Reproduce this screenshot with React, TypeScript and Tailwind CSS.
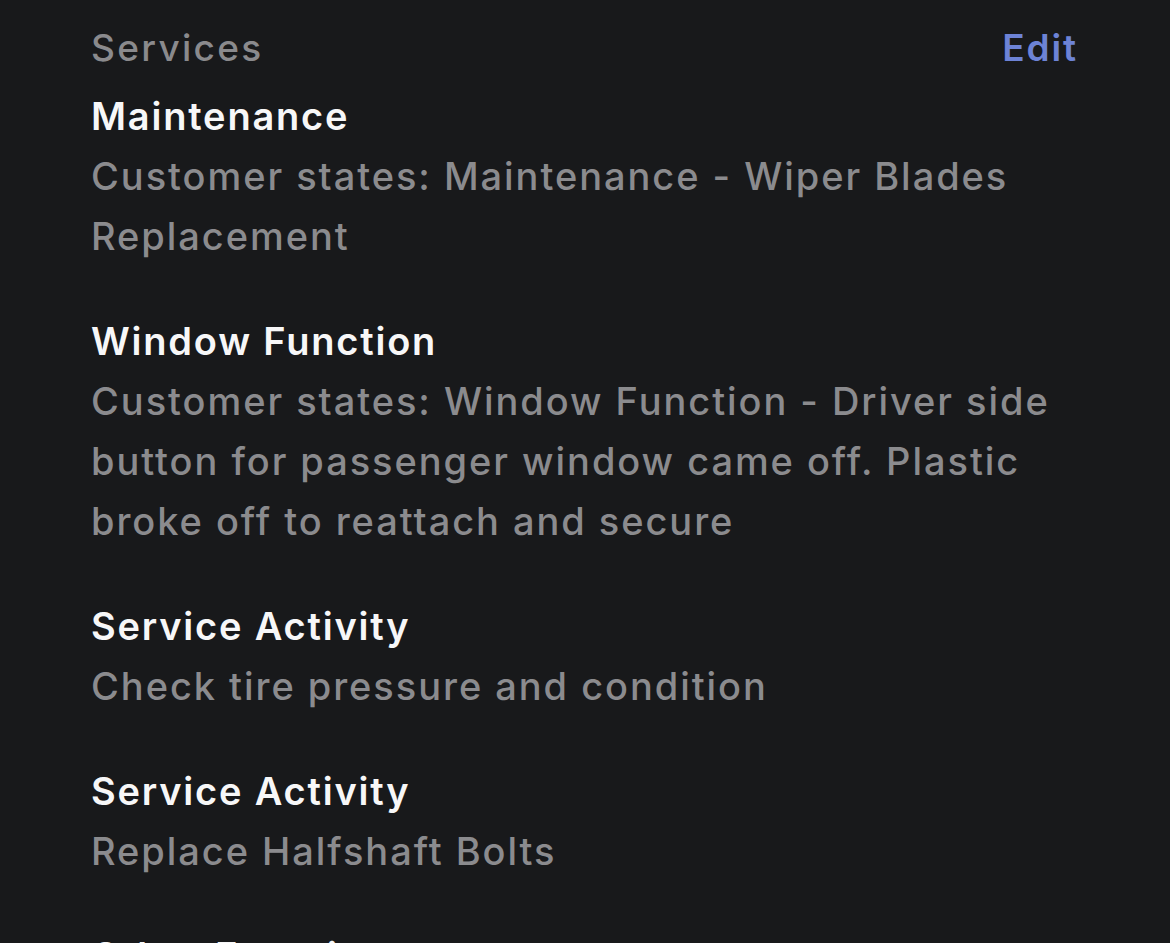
import React from 'react';

const services = [
  {
    title: 'Maintenance',
    desc: 'Customer states: Maintenance - Wiper Blades Replacement',
  },
  {
    title: 'Window Function',
    desc: 'Customer states: Window Function - Driver side button for passenger window came off. Plastic broke off to reattach and secure',
  },
  { title: 'Service Activity', desc: 'Check tire pressure and condition' },
  { title: 'Service Activity', desc: 'Replace Halfshaft Bolts' },
  { title: 'Other Function', desc: 'Customer states: Other Function' },
];

export default function App() {
  return (
    <div className="h-[943px] overflow-hidden bg-[#18191b] font-['Inter',sans-serif]">
      <div className="pl-[91px] pr-[94px] pt-[18px]">
        {/* Header */}
        <div className="flex items-center justify-between h-[60px] -mr-[2px]">
          <span className="text-[37px] font-medium tracking-[2.3px] text-[#8a8a8d]">Services</span>
          <button className="text-[37px] font-semibold tracking-[1.9px] text-[#6d83d6]">Edit</button>
        </div>

        {/* List */}
        <div className="flex flex-col gap-[45px] pt-[8px]">
          {services.map((s, i) => (
            <div key={i} className="text-[38px] leading-[60px]">
              <div className="font-semibold tracking-[1.8px] text-[#f7f7f8]">{s.title}</div>
              <div className="font-medium tracking-[1.95px] text-[#8b8b8e]">{s.desc}</div>
            </div>
          ))}
        </div>
      </div>
    </div>
  );
}
